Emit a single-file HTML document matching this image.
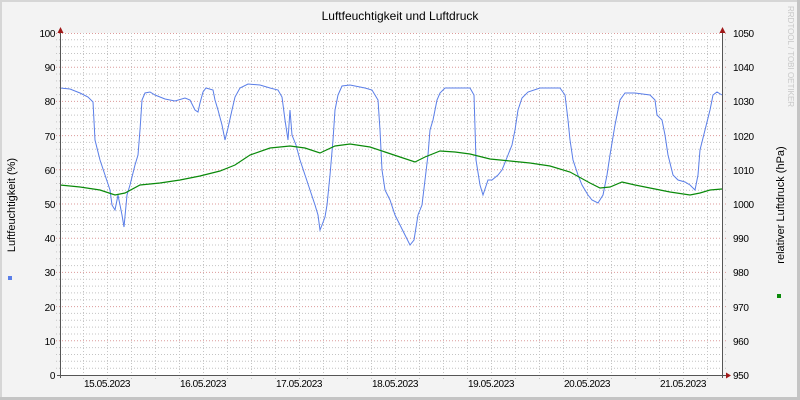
<!DOCTYPE html>
<html><head><meta charset="utf-8"><style>
html,body{margin:0;padding:0;background:#f3f3f3}
svg{display:block}
text{font-family:"Liberation Sans",sans-serif;font-size:10px;fill:#000;letter-spacing:-0.4px}
</style></head><body>
<svg id="g" width="800" height="400" xmlns="http://www.w3.org/2000/svg">
<rect x="0" y="0" width="800" height="400" fill="#d6d6d6"/>
<rect x="2" y="2" width="795" height="395" fill="#f3f3f3"/>
<rect x="0" y="397" width="800" height="3" fill="#c4c4c4"/>
<rect x="797" y="0" width="3" height="400" fill="#c4c4c4"/>
<rect x="60.5" y="33" width="662" height="342" fill="#fff"/>
<g id="grid"></g>
<text x="400" y="20" text-anchor="middle" style="font-size:12px;letter-spacing:0">Luftfeuchtigkeit und Luftdruck</text>
<g text-anchor="end">
<text x="55" y="37">100</text><text x="55" y="71">90</text><text x="55" y="105">80</text><text x="55" y="140">70</text><text x="55" y="174">60</text><text x="55" y="208">50</text><text x="55" y="242">40</text><text x="55" y="276">30</text><text x="55" y="311">20</text><text x="55" y="345">10</text><text x="55" y="379">0</text>
</g>
<g>
<text x="733" y="37">1050</text><text x="733" y="71">1040</text><text x="733" y="105">1030</text><text x="733" y="140">1020</text><text x="733" y="174">1010</text><text x="733" y="208">1000</text><text x="733" y="242">990</text><text x="733" y="276">980</text><text x="733" y="311">970</text><text x="733" y="345">960</text><text x="733" y="379">950</text>
</g>
<g text-anchor="middle">
<text x="107" y="387">15.05.2023</text><text x="203" y="387">16.05.2023</text><text x="299" y="387">17.05.2023</text><text x="395" y="387">18.05.2023</text><text x="491" y="387">19.05.2023</text><text x="587" y="387">20.05.2023</text><text x="683" y="387">21.05.2023</text>
</g>
<text transform="translate(15,205) rotate(-90)" text-anchor="middle" style="font-size:11px;letter-spacing:0">Luftfeuchtigkeit (%)</text>
<text transform="translate(784,205) rotate(-90)" text-anchor="middle" style="font-size:11px;letter-spacing:0">relativer Luftdruck (hPa)</text>
<text transform="translate(788,6) rotate(90)" style="font-size:8px;fill:#c8c8c8;letter-spacing:0">RRDTOOL / TOBI OETIKER</text>
<rect x="8" y="276" width="4" height="4" fill="#5a7ee8"/>
<rect x="777" y="294" width="4" height="4" fill="#0a8a0a"/>
<polyline fill="none" stroke="#5a7ee8" stroke-width="1" points="60,88 70,89 80,93 88,97 93,102 95,140 100,160 105,175 110,190 112,205 115,210 118,195 122,215 124,227 127,195 130,185 135,165 138,155 140,130 142,100 145,93 150,92 155,95 165,99 175,101 185,98 190,100 195,110 198,112 200,103 203,92 206,88 213,90 215,100 218,110 222,125 225,140 228,128 232,110 235,97 240,88 248,84 260,85 270,88 278,90 282,97 285,120 288,140 290,110 292,135 296,145 300,160 305,175 310,190 315,205 318,215 320,230 322,225 325,217 327,205 330,175 333,140 335,110 338,95 342,86 350,85 365,88 372,90 375,95 378,100 380,130 382,170 385,190 390,200 395,215 400,225 405,235 410,245 414,240 418,215 422,205 425,180 428,155 430,130 433,120 437,100 440,93 445,88 460,88 470,88 474,95 476,160 480,185 483,195 488,180 492,180 498,175 502,170 508,155 512,145 515,130 518,110 522,98 528,92 540,88 560,88 565,95 568,120 570,140 573,160 578,175 582,185 588,195 592,200 598,203 603,195 607,175 610,155 615,125 620,100 625,93 635,93 650,95 655,100 657,115 662,120 665,135 668,155 673,175 678,180 685,182 690,185 695,190 698,175 700,150 705,130 710,110 713,95 717,92 722,95"/>
<polyline fill="none" stroke="#0a8a0a" stroke-width="1.2" points="60,185 80,187 100,190 115,195 125,193 140,185 160,183 180,180 200,176 220,171 235,165 250,155 270,148 290,146 305,148 320,153 335,146 350,144 370,147 385,152 400,157 415,162 425,157 440,151 455,152 470,154 490,159 510,161 530,163 550,166 570,172 590,183 600,188 610,187 622,182 635,185 650,188 670,192 690,195 700,193 710,190 722,189"/>
<line x1="60.5" y1="30" x2="60.5" y2="378" stroke="#555"/>
<line x1="722.5" y1="30" x2="722.5" y2="378" stroke="#555"/>
<line x1="57" y1="375.5" x2="726" y2="375.5" stroke="#555"/>
<polygon points="57.5,33 63.5,33 60.5,27" fill="#a01818"/>
<polygon points="719.5,33 725.5,33 722.5,27" fill="#a01818"/>
<polygon points="726,372.5 726,378.5 731,375.5" fill="#a01818"/>
</svg>
<script>
var g=document.getElementById('grid'),s='';
for(var v=2;v<100;v+=2){var y=(375-v*3.42).toFixed(1);var maj=v%10==0;
s+='<line x1="56" x2="727" y1="'+y+'" y2="'+y+'" stroke="'+(maj?'#dc9a9a':'#c4c4c4')+'" stroke-dasharray="1,2"/>';}
s+='<line x1="56" x2="727" y1="33.5" y2="33.5" stroke="#dc9a9a" stroke-dasharray="1,2"/>';
for(var x=83;x<722;x+=24){var maj=((x-154)%96==0);
s+='<line y1="33" y2="379" x1="'+(x+0.5)+'" x2="'+(x+0.5)+'" stroke="'+(maj?'#dc9a9a':'#c4c4c4')+'" stroke-dasharray="1,2"/>';}
g.innerHTML=s;
</script>
</body></html>
